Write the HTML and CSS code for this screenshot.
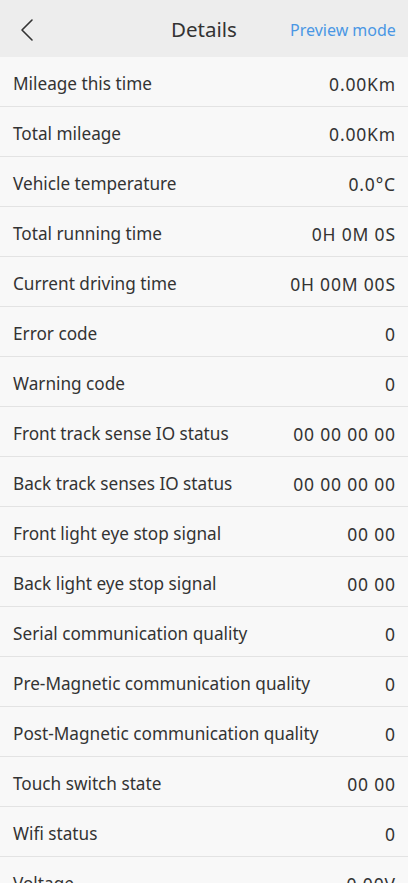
FILE: index.html
```html
<!DOCTYPE html>
<html lang="en">
<head>
  <meta charset="UTF-8">
  <meta name="viewport" content="width=device-width, initial-scale=1.0">
  <title>Details</title>
  <link rel="stylesheet" href="styles.css">
</head>
<body>
  <div class="header">
    <div class="back">
      <svg width="14" height="24" viewBox="0 0 14 24"><path d="M12 2 L2 12 L12 22" fill="none" stroke="#333" stroke-width="1.6" stroke-linecap="round" stroke-linejoin="round"/></svg>
    </div>
    <div class="title">Details</div>
    <div class="mode">Preview mode</div>
  </div>
  <ul class="list">
    <li><span>Mileage this time</span><span class="val">0.00Km</span></li>
    <li><span>Total mileage</span><span class="val">0.00Km</span></li>
    <li><span>Vehicle temperature</span><span class="val">0.0°C</span></li>
    <li><span>Total running time</span><span class="val">0H 0M 0S</span></li>
    <li><span>Current driving time</span><span class="val">0H 00M 00S</span></li>
    <li><span>Error code</span><span class="val">0</span></li>
    <li><span>Warning code</span><span class="val">0</span></li>
    <li><span>Front track sense IO status</span><span class="val">00 00 00 00</span></li>
    <li><span>Back track senses IO status</span><span class="val">00 00 00 00</span></li>
    <li><span>Front light eye stop signal</span><span class="val">00 00</span></li>
    <li><span>Back light eye stop signal</span><span class="val">00 00</span></li>
    <li><span>Serial communication quality</span><span class="val">0</span></li>
    <li><span>Pre-Magnetic communication quality</span><span class="val">0</span></li>
    <li><span>Post-Magnetic communication quality</span><span class="val">0</span></li>
    <li><span>Touch switch state</span><span class="val">00 00</span></li>
    <li><span>Wifi status</span><span class="val">0</span></li>
    <li><span>Voltage</span><span class="val">0.00V</span></li>
  </ul>
</body>
</html>
```
FILE: styles.css
```css
* {margin: 0; padding: 0; box-sizing: border-box;}
html, body {height: 100%; overflow: hidden;}
body {
  background: #f8f8f8;
  font-family: "Noto Sans", Roboto, sans-serif;
  color: #333;
}
li {list-style: none;}
.header {
  height: 57px;
  background: #ededed;
  display: flex;
  align-items: center;
  padding: 0 14px 0 20px;
}
.back {
  width: 100px;
  display: flex;
  align-items: center;
  padding-top: 2px;
}
.title {
  flex: 1;
  text-align: center;
  font-size: 20.5px;
  padding-right: 2px;
}
.mode {
  width: 104px;
  text-align: right;
  font-size: 16px;
  color: #4a97e4;
  white-space: nowrap;
  padding-top: 2px;
}
.list li {
  height: 50px;
  border-bottom: 1px solid #e3e3e3;
  display: flex;
  justify-content: space-between;
  align-items: center;
  padding: 4px 13px 0;
  font-size: 17.2px;
}
.list .val {
  font-size: 17.5px;
  letter-spacing: 0.8px;
  margin-right: -0.8px;
  white-space: nowrap;
}
```
